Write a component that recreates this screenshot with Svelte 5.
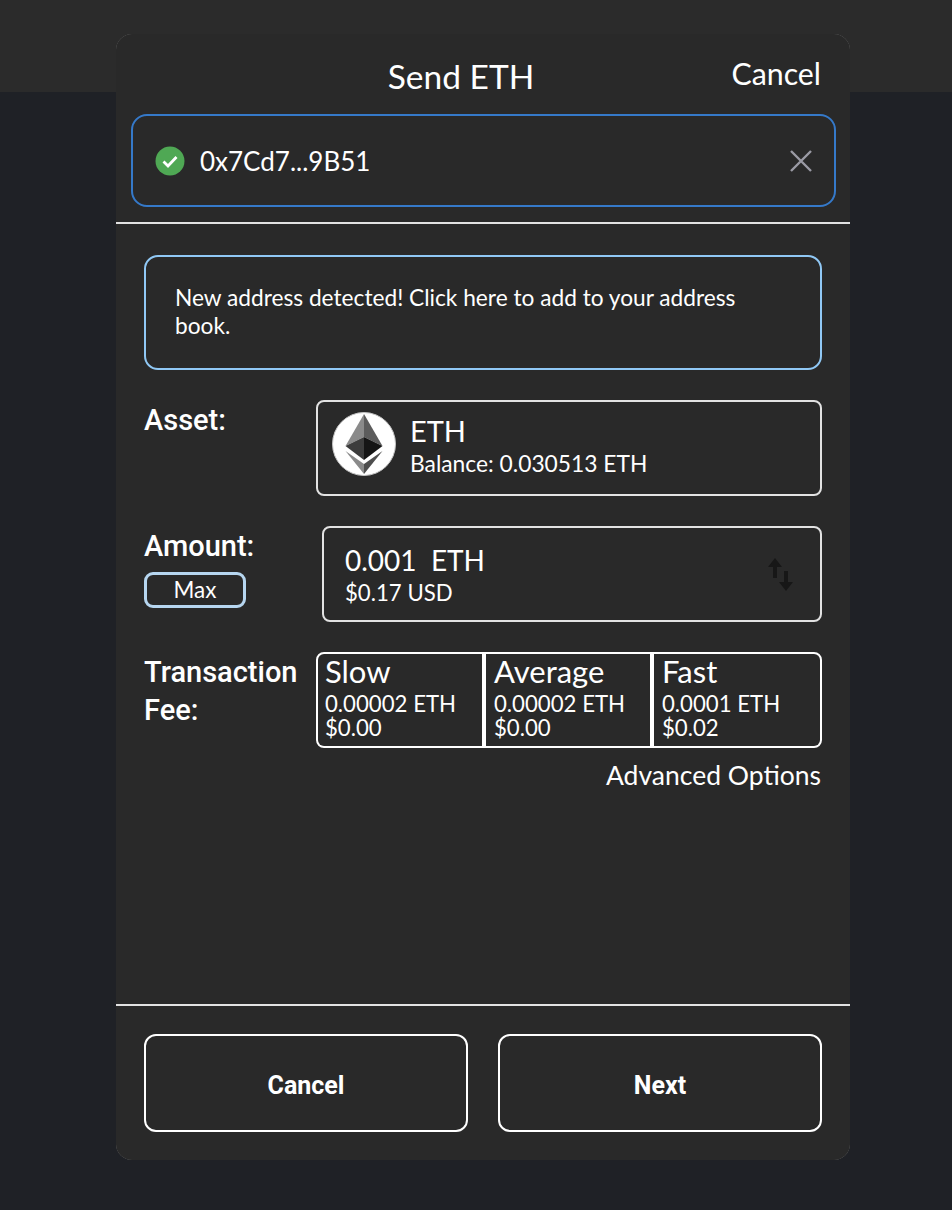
<script>
	const fees = [
		{ name: 'Slow', eth: '0.00002 ETH', usd: '$0.00' },
		{ name: 'Average', eth: '0.00002 ETH', usd: '$0.00' },
		{ name: 'Fast', eth: '0.0001 ETH', usd: '$0.02' }
	];
</script>

<div class="page">
	<div class="topbar"></div>

	<div class="modal">
		<div class="modal-inner">
			<header>
				<h1>Send ETH</h1>
				<span class="top-cancel">Cancel</span>
			</header>

			<div class="address">
				<svg class="check" viewBox="0 0 30 30" width="30" height="30">
					<circle cx="15" cy="15" r="14.5" fill="#4fa854" />
					<path d="M8.5 15.5l4.5 4.5 8.5-9" fill="none" stroke="#fff" stroke-width="2.8" />
				</svg>
				<span class="addr-text">0x7Cd7...9B51</span>
				<svg class="close" viewBox="0 0 22 22" width="22" height="22">
					<path d="M1 1l20 20M21 1L1 21" stroke="#9a9aa4" stroke-width="2.4" />
				</svg>
			</div>

			<div class="body">
				<div class="notice">New address detected! Click here to add to your address book.</div>

				<div class="row asset-row">
					<div class="label">Asset:</div>
					<div class="box asset-box">
						<svg class="eth-logo" viewBox="0 0 64 64" width="64" height="64">
							<circle cx="32" cy="32" r="31.5" fill="#fff" stroke="#c4c4c4" stroke-width="1" />
							<path d="M32 2L13.5 34 32 25z" fill="#8a8a8a" />
							<path d="M32 2l18.5 32L32 25z" fill="#5c5c5c" />
							<path d="M13.5 34L32 25v23z" fill="#3c3c3c" />
							<path d="M50.5 34L32 25v23z" fill="#151515" />
							<path d="M13.5 39L32 52v10z" fill="#8a8a8a" />
							<path d="M50.5 39L32 52v10z" fill="#4e4e4e" />
						</svg>
						<div class="asset-text">
							<div class="asset-name">ETH</div>
							<div class="asset-balance">Balance: 0.030513 ETH</div>
						</div>
					</div>
				</div>

				<div class="row amount-row">
					<div class="amount-left">
						<div class="label">Amount:</div>
						<button class="max">Max</button>
					</div>
					<div class="box amount-box">
						<div>
							<div class="amount-value">0.001&nbsp; ETH</div>
							<div class="amount-usd">$0.17 USD</div>
						</div>
						<svg class="swap" viewBox="0 0 25 33" width="25" height="33">
							<path d="M7 0L0 9h5v11h4V9h5zM18 33l7-9h-5V13h-4v11h-5z" fill="#171717" />
						</svg>
					</div>
				</div>

				<div class="row fee-row">
					<div class="label fee-label">Transaction Fee:</div>
					<div class="fees">
						{#each fees as fee}
							<div class="fee">
								<div class="fee-name">{fee.name}</div>
								<div class="fee-line">{fee.eth}</div>
								<div class="fee-line">{fee.usd}</div>
							</div>
						{/each}
					</div>
				</div>

				<div class="advanced">Advanced Options</div>
			</div>

			<footer>
				<button class="action">Cancel</button>
				<button class="action">Next</button>
			</footer>
		</div>
	</div>
</div>

<style>
	:global(body) {
		margin: 0;
		background: #1f2126;
	}

	.page {
		position: relative;
		height: 1210px;
		font-family: 'Lato', 'Open Sans', sans-serif;
		color: #fff;
	}

	.topbar {
		height: 92px;
		background: #2b2b2b;
	}

	.modal {
		position: absolute;
		top: 34px;
		left: 116px;
		width: 734px;
		height: 1126px;
		background: #808080;
		border-radius: 16px;
	}

	.modal-inner {
		height: 100%;
		background: #292929;
		border-radius: 16px;
		display: flex;
		flex-direction: column;
	}

	header {
		height: 80px;
		position: relative;
		display: flex;
		justify-content: center;
		flex-shrink: 0;
	}

	h1 {
		margin: 23px 44px 0 0;
		font-size: 33.5px;
		line-height: 38px;
		font-weight: 400;
	}

	.top-cancel {
		position: absolute;
		right: 29px;
		top: 20px;
		font-size: 30.3px;
		line-height: 38px;
	}

	.address {
		margin: 0 14px 0 15px;
		height: 93px;
		box-sizing: border-box;
		border: 2px solid #3579c9;
		border-radius: 16px;
		display: flex;
		align-items: center;
		padding: 0 22px;
		flex-shrink: 0;
	}

	.addr-text {
		margin-left: 15px;
		font-size: 26px;
		flex: 1;
	}

	.body {
		margin-top: 15px;
		border-top: 2px solid #e2e2e2;
		border-bottom: 2px solid #e2e2e2;
		padding: 31px 28px 0;
		height: 784px;
		box-sizing: border-box;
		flex-shrink: 0;
	}

	.notice {
		box-sizing: border-box;
		height: 115px;
		border: 2px solid #90c8f5;
		border-radius: 14px;
		padding: 27px 29px 0;
		font-size: 22.7px;
		line-height: 28px;
	}

	.row {
		display: flex;
		justify-content: space-between;
	}

	.asset-row,
	.amount-row,
	.fee-row {
		margin-top: 30px;
	}

	.label {
		font-family: 'Roboto', sans-serif;
		font-weight: 500;
		font-size: 29px;
		line-height: 40px;
	}

	.box {
		box-sizing: border-box;
		height: 96px;
		border: 2px solid #e2e2e2;
		border-radius: 8px;
		display: flex;
		align-items: center;
	}

	.asset-box {
		width: 506px;
		padding-left: 14px;
	}

	.eth-logo {
		margin-bottom: 8px;
	}

	.asset-text {
		margin-left: 14px;
		margin-bottom: 6px;
	}

	.asset-name {
		font-size: 29px;
		line-height: 36px;
	}

	.asset-balance {
		font-size: 22.8px;
		line-height: 28px;
	}

	.max {
		display: block;
		width: 102px;
		height: 36px;
		margin-top: 6px;
		padding: 0 0 2px;
		background: transparent;
		border: 3px solid #b6d6f0;
		border-radius: 9px;
		color: #fff;
		font-family: inherit;
		font-size: 22.5px;
	}

	.amount-box {
		width: 500px;
		padding: 0 27px 0 21px;
		justify-content: space-between;
	}

	.amount-value {
		font-size: 28px;
		line-height: 36px;
	}

	.amount-usd {
		font-size: 22.2px;
		line-height: 29px;
	}

	.fee-label {
		width: 170px;
		margin-top: 1px;
		line-height: 38px;
	}

	.fees {
		box-sizing: border-box;
		width: 506px;
		height: 96px;
		display: grid;
		grid-template-columns: 164px 164px 1fr;
		gap: 4px;
		background: #fff;
		border: 2px solid #fff;
		border-radius: 8px;
		overflow: hidden;
	}

	.fee {
		background: #292929;
		padding: 0 7px;
	}

	.fee + .fee {
		padding-left: 8px;
	}

	.fee-name {
		margin: -1px 0 3px;
		font-size: 31px;
		line-height: 36px;
	}

	.fee-line {
		font-size: 22.2px;
		line-height: 24px;
	}

	.advanced {
		text-align: right;
		font-size: 26.5px;
		line-height: 30px;
		margin-top: 12px;
		padding-right: 1px;
	}

	footer {
		display: flex;
		justify-content: space-between;
		padding: 28px 28px 0;
	}

	.action {
		width: 324px;
		height: 98px;
		padding: 4px 0 0;
		background: transparent;
		border: 2px solid #fff;
		border-radius: 12px;
		color: #fff;
		font-family: 'Roboto', sans-serif;
		font-weight: 700;
		font-size: 25px;
	}
</style>
